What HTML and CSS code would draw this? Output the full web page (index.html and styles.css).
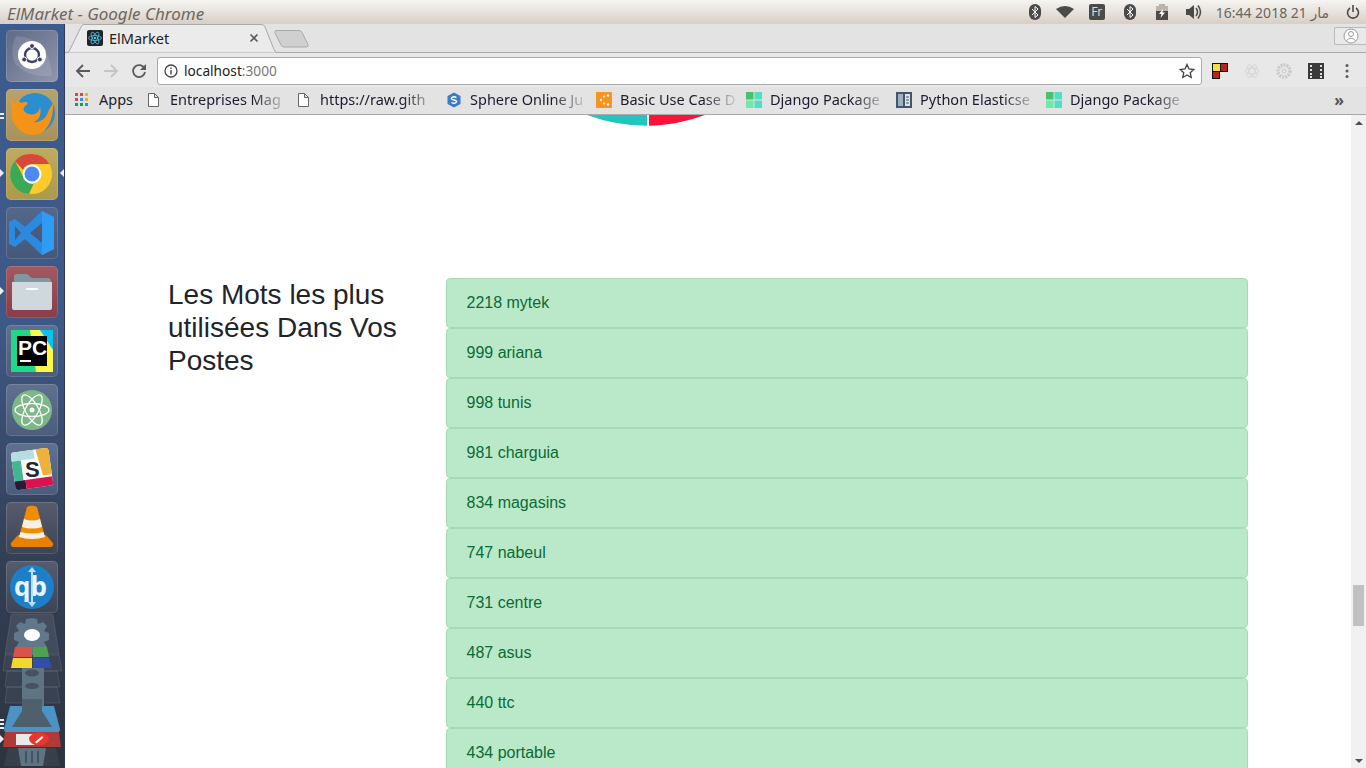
FILE: index.html
```html
<!DOCTYPE html>
<html lang="en">
<head>
    <meta charset="UTF-8">
    <title>ElMarket - Google Chrome</title>
    <link rel="stylesheet" href="styles.css">
</head>
<body>
    <header class="topbar">
        <div class="window-title">ElMarket - Google Chrome</div>
        <div class="tray">
            <svg class="tray-bt" width="14" height="18" viewBox="0 0 14 18"><rect x="1" y="1" width="12" height="16" rx="6" fill="#4a4a4a"/><path d="M4 6l6 6-3 2.500V3.500l3 2.500-6 6" fill="none" stroke="#fff" stroke-width="1"/></svg>
            <svg class="tray-wifi" width="18" height="12" viewBox="0 0 18 12"><path d="M0 3Q9-3 18 3L9 12z" fill="#4a4a4a"/></svg>
            <div class="tray-fr">Fr</div>
            <svg class="tray-bt2" width="14" height="18" viewBox="0 0 14 18"><rect x="1" y="1" width="12" height="16" rx="6" fill="#4a4a4a"/><path d="M4 6l6 6-3 2.500V3.500l3 2.500-6 6" fill="none" stroke="#fff" stroke-width="1"/></svg>
            <svg class="tray-batt" width="12" height="16" viewBox="0 0 12 16"><path d="M0 2h3V0h6v2h3v5H0z" fill="#b9b4ae"/><path d="M0 7h12v9H0z" fill="#4a4a4a"/><path d="M7 5L3 10h2.500L4.500 14 9 8.500H6.500z" fill="#fff"/></svg>
            <svg class="tray-vol" width="16" height="16" viewBox="0 0 16 16"><path d="M0 5h3l5-4v14l-5-4H0z" fill="#4a4a4a"/><path d="M10 4q3 4 0 8M12 1.500q5 6.500 0 13" fill="none" stroke="#4a4a4a" stroke-width="1.500"/></svg>
            <div class="clock"><span>16:44</span> <span>2018</span> <span>21</span> <span class="clock-ar" dir="rtl">مار</span></div>
            <svg class="tray-power" width="14" height="14" viewBox="0 0 14 14"><path d="M4 3a5.500 5.500 0 1 0 6 0M7 0v7" fill="none" stroke="#4a4a4a" stroke-width="1.600"/></svg>
        </div>
    </header>

    <div class="desktop">
        <nav class="dock">
            <div class="tile tile-ubuntu">
                <svg viewBox="0 0 52 52"><path d="M10 6Q44 8 46 46 20 48 8 32 4 18 10 6z" fill="#fff" opacity=".12"/><circle cx="26" cy="25" r="14" fill="#fff"/><circle cx="26" cy="25" r="7" fill="none" stroke="#3c4260" stroke-width="2.400"/><circle cx="26" cy="16" r="2.500" fill="#3c4260" stroke="#fff"/><circle cx="18.200" cy="29.500" r="2.500" fill="#3c4260" stroke="#fff"/><circle cx="33.800" cy="29.500" r="2.500" fill="#3c4260" stroke="#fff"/></svg>
            </div>
            <div class="tile tile-firefox">
                <svg viewBox="0 0 52 52"><circle cx="29" cy="24" r="20" fill="#2a8fd0"/><path d="M4 10l5 4 3-3 3 3c8-3 8 1 4 3-3 3-1 7 4 8 6 2 10-2 11-7 2 7-1 14-7 15 6 1 13-3 15-10 1-3 3-5 5-9 1 14-5 32-20 32C14 46 3 32 6 22z" fill="#f39318"/></svg>
            </div>
            <div class="tile tile-chrome">
                <svg viewBox="0 0 52 52"><circle cx="26" cy="26" r="20" fill="#ffca2c"/><path d="M26 6a20 20 0 0 1 17.300 10H26a10 10 0 0 0-9 5.800L9 13A20 20 0 0 1 26 6z" fill="#d8483c"/><path d="M9 13l9.500 18a10 10 0 0 0 9 5L23 46A20 20 0 0 1 9 13z" fill="#3aa856"/><circle cx="26" cy="26" r="9.500" fill="#fff"/><circle cx="26" cy="26" r="7.500" fill="#4f88ee"/></svg>
            </div>
            <div class="tile tile-code">
                <svg viewBox="0 0 52 52"><path d="M36 4l12 6v32l-12 6-17-16-10 8-6-3V15l6-3 10 8z" fill="#2a8adf"/><path d="M36 16L24 26l12 10z" fill="#4a5a7c"/><path d="M9 19v14l6-7z" fill="#4a5a7c"/><path d="M36 4l12 6v32l-12 6z" fill="#2f9bf2"/></svg>
            </div>
            <div class="tile tile-files">
                <svg viewBox="0 0 52 52"><path d="M8 11q0-3 3-3h10l5 4h16q3 0 3 3v10H8z" fill="#7e98a2"/><path d="M6 16h40v26q0 2-2 2H8q-2 0-2-2z" fill="#cfd8dd"/><rect x="20" y="22" width="12" height="2" fill="#fff"/></svg>
            </div>
            <div class="tile tile-pycharm">
                <svg viewBox="0 0 52 52"><rect x="5" y="5" width="42" height="42" fill="#21d789"/><path d="M24 5h23v42H30z" fill="#fcf84a"/><path d="M34 5h13v20z" fill="#07c3f2"/><rect x="11" y="11" width="30" height="30" fill="#000"/><rect x="14" y="35" width="11" height="2" fill="#fff"/><text x="12" y="30" class="pc-text">PC</text></svg>
            </div>
            <div class="tile tile-atom">
                <svg viewBox="0 0 52 52"><circle cx="26" cy="26" r="20" fill="#7db788"/><g fill="none" stroke="#fff" stroke-width="1.300"><ellipse cx="26" cy="26" rx="17" ry="6.500"/><ellipse cx="26" cy="26" rx="17" ry="6.500" transform="rotate(60 26 26)"/><ellipse cx="26" cy="26" rx="17" ry="6.500" transform="rotate(120 26 26)"/></g><circle cx="26" cy="26" r="2.500" fill="#fff"/></svg>
            </div>
            <div class="tile tile-slack">
                <svg viewBox="0 0 52 52"><g transform="rotate(-8 26 26)"><rect x="7" y="7" width="38" height="38" rx="3" fill="#fff"/><path d="M7 10q0-3 3-3h20v9H7z" fill="#b3dfe0"/><path d="M32 7h10q3 0 3 3v24H36z" fill="#eeb23a"/><path d="M7 16h9v20H7z" fill="#41b78f"/><path d="M7 36h11v9h-8q-3 0-3-3z" fill="#2b1a33"/><path d="M18 36h27v6q0 3-3 3H18z" fill="#d9134f"/></g><text x="19" y="34" class="slack-text">S</text></svg>
            </div>
            <div class="tile tile-vlc">
                <svg viewBox="0 0 52 52"><path d="M5 41l7-8h28l7 8q1 4-3 4H8q-4 0-3-4z" fill="#e88000"/><path d="M21 5q5-3 10 0l8 30q-13 5-26 0z" fill="#f08c00"/><path d="M18 17q8 3 16 0l2 8q-10 3-20 0z" fill="#f4f1ea"/><path d="M14.500 30q11.500 3 23 0l1.500 5q-13 4-26 0z" fill="#f4f1ea"/></svg>
            </div>
            <div class="tile tile-qb">
                <svg viewBox="0 0 52 52"><circle cx="26" cy="26" r="22" fill="#1c7fc7"/><text x="8" y="35" class="qb-text">qb</text><path d="M26 6l-4 5h3v30h2V11h3zM26 46l-4-5h8z" fill="#b8e0f8"/></svg>
            </div>
            <svg class="dock-stack" width="65" height="153" viewBox="0 0 65 153">
                <path d="M11 3q0-2 3-2h36q3 0 3 2l6 38H5z" fill="#fff" fill-opacity=".09" stroke="#fff" stroke-opacity=".1"/>
                <path d="M5 42h54l3 16H3zM7 58h50l3 16H5zM7 74h50l3 16H5z" fill="#fff" fill-opacity=".05" stroke="#fff" stroke-opacity=".1"/>
                <path d="M32 5l5 1 1 5 5-2 4 4-3 5 5 2v7l-5 2 3 5-4 4-5-2-1 5-5 1-6-1-1-5-5 2-4-4 3-5-5-2v-7l5-2-3-5 4-4 5 2 1-5z" fill="#62778a"/>
                <ellipse cx="32" cy="22" rx="8" ry="6" fill="#fff"/>
                <path d="M15 34h17v10H13z" fill="#d9534a"/><path d="M33 34h14l2 10H33z" fill="#4fa24f"/>
                <path d="M13 45h19v10H11z" fill="#f3d62f"/><path d="M33 45h16l3 10H33z" fill="#2f4fa8"/>
                <path d="M22 55h22v38H22z" fill="#5e7483"/>
                <ellipse cx="32" cy="60" rx="7" ry="3.500" fill="#46525f"/><ellipse cx="32" cy="73" rx="7" ry="3" fill="#46525f"/>
                <path d="M10 93h44l6 23q0 3-2 3H6q-2 0-2-3z" fill="#4a93c4"/>
                <path d="M22 86h20v12l10 16H12l10-16z" fill="#4f5f6c"/>
                <path d="M5 119h54l2 15H3z" fill="#b03a36"/>
                <rect x="16" y="121" width="24" height="11" fill="#e9e9e9"/>
                <ellipse cx="39" cy="126" rx="10" ry="6.500" fill="#e8352e"/><path d="M35 129l7-6 1.500 1.500-7 6z" fill="#fff"/>
                <path d="M8 135h48l4 18H4z" fill="#fff" fill-opacity=".06"/>
                <path d="M18 135h28l-3 18H21z" fill="#5e7483"/>
                <path d="M26 138v12M32 138v12M38 138v12" stroke="#3b4755" stroke-width="1.500"/>
                <path d="M0 106h4v2H0zM0 110h4v2H0zM0 114h4v2H0zM0 122l4 4-4 4z" fill="#eee"/>
            </svg>
        </nav>

        <div class="browser">
            <div class="tabstrip">
                <div class="tab">
                    <svg class="tab-shape" width="214" height="29" viewBox="0 0 214 29"><path d="M0 28.500h2q2 0 3-3L16 3q1-2.500 3-2.500h178q2 0 3 2.500l9 22.500q1 3 3 3h2" fill="#ebebeb" stroke="#a9a9a9"/></svg>
                    <svg class="favicon" width="16" height="16" viewBox="0 0 16 16"><rect width="16" height="16" rx="2" fill="#20232a"/><g fill="none" stroke="#53c1de" stroke-width=".8"><ellipse cx="8" cy="8" rx="6.500" ry="2.500"/><ellipse cx="8" cy="8" rx="6.500" ry="2.500" transform="rotate(60 8 8)"/><ellipse cx="8" cy="8" rx="6.500" ry="2.500" transform="rotate(120 8 8)"/></g><circle cx="8" cy="8" r="1.300" fill="#53c1de"/></svg>
                    <span class="tab-title">ElMarket</span>
                    <svg class="tab-close" width="10" height="10" viewBox="0 0 10 10"><path d="M1.500 1.500l7 7M8.500 1.500l-7 7" stroke="#5a5a5a" stroke-width="1.600"/></svg>
                </div>
                <svg class="new-tab" width="36" height="20" viewBox="0 0 36 20"><path d="M3 1.500h22q2 0 3 2l6 12q1 2.500-2 2.500H10q-2 0-3-2L1 4q-1-2.500 2-2.500z" fill="#d0d0d0" stroke="#a9a9a9"/></svg>
                <div class="profile">
                    <svg width="16" height="16" viewBox="0 0 16 16"><circle cx="8" cy="8" r="7" fill="#fff" stroke="#9a9a9a"/><circle cx="8" cy="6" r="2.500" fill="none" stroke="#9a9a9a"/><path d="M3.500 12.500Q8 8 12.500 12.500" fill="none" stroke="#9a9a9a"/></svg>
                </div>
            </div>

            <div class="toolbar">
                <svg class="nav-btn nav-back" width="16" height="16" viewBox="0 0 16 16"><path d="M15 8H2M8 2L2 8l6 6" fill="none" stroke="#5a5a5a" stroke-width="1.800"/></svg>
                <svg class="nav-btn nav-fwd" width="16" height="16" viewBox="0 0 16 16"><path d="M1 8h13M8 2l6 6-6 6" fill="none" stroke="#c4c4c4" stroke-width="1.800"/></svg>
                <svg class="nav-btn nav-reload" width="16" height="16" viewBox="0 0 16 16"><path d="M13.500 5.500A6 6 0 1 0 14 9" fill="none" stroke="#5a5a5a" stroke-width="1.800"/><path d="M15 1v6H9z" fill="#5a5a5a"/></svg>
                <div class="omnibox">
                    <svg class="info" width="14" height="14" viewBox="0 0 14 14"><circle cx="7" cy="7" r="6" fill="none" stroke="#444" stroke-width="1.300"/><path d="M7 6v4.500M7 3.500v1.500" stroke="#444" stroke-width="1.400"/></svg>
                    <span class="url">localhost<span class="url-port">:3000</span></span>
                    <svg class="star" width="16" height="16" viewBox="0 0 16 16"><path d="M8 1.500l2 4.500 4.800.5-3.600 3.200 1 4.800L8 12l-4.200 2.500 1-4.800L1.200 6.500 6 6z" fill="none" stroke="#444" stroke-width="1.300"/></svg>
                </div>
                <div class="extensions">
                    <svg width="16" height="16" viewBox="0 0 16 16"><path d="M0 0h16v9H8v7H0z" fill="#111"/><rect x="1" y="1" width="7" height="7" fill="#f5e13a"/><rect x="9" y="1" width="6" height="7" fill="#b5261e"/><rect x="1" y="9" width="6" height="6" fill="#b5261e"/></svg>
                    <svg width="16" height="16" viewBox="0 0 16 16"><g fill="none" stroke="#d6d6d6"><ellipse cx="8" cy="8" rx="7" ry="3"/><ellipse cx="8" cy="8" rx="7" ry="3" transform="rotate(60 8 8)"/><ellipse cx="8" cy="8" rx="7" ry="3" transform="rotate(120 8 8)"/></g></svg>
                    <svg width="16" height="16" viewBox="0 0 16 16"><circle cx="8" cy="8" r="6" fill="none" stroke="#cacaca" stroke-width="3.500" stroke-dasharray="2 1"/><circle cx="8" cy="8" r="2" fill="none" stroke="#cacaca"/></svg>
                    <svg width="16" height="16" viewBox="0 0 16 16"><rect width="16" height="16" fill="#3a3a3a"/><path d="M2 2h2v2H2zM2 6h2v2H2zM2 10h2v2H2zM2 13h2v2H2zM12 2h2v2h-2zM12 6h2v2h-2zM12 10h2v2h-2zM12 13h2v2h-2z" fill="#ddd"/></svg>
                    <svg class="menu-dots" width="4" height="16" viewBox="0 0 4 16"><circle cx="2" cy="2.500" r="1.500" fill="#5a5a5a"/><circle cx="2" cy="8" r="1.500" fill="#5a5a5a"/><circle cx="2" cy="13.500" r="1.500" fill="#5a5a5a"/></svg>
                </div>
            </div>

            <div class="bookmarks">
                <div class="bm bm-apps">
                    <svg width="13" height="13" viewBox="0 0 13 13"><path d="M0 0h3v3H0z" fill="#e0433b"/><path d="M5 0h3v3H5z" fill="#e0433b"/><path d="M10 0h3v3h-3z" fill="#f4b400"/><path d="M0 5h3v3H0z" fill="#e0433b"/><path d="M5 5h3v3H5z" fill="#4285f4"/><path d="M10 5h3v3h-3z" fill="#f4b400"/><path d="M0 10h3v3H0z" fill="#0f9d58"/><path d="M5 10h3v3H5z" fill="#0f9d58"/><path d="M10 10h3v3h-3z" fill="#4285f4"/></svg>
                    <span>Apps</span>
                </div>
                <div class="bm">
                    <svg width="16" height="16" viewBox="0 0 16 16"><path d="M2.500 1.500h6l4 4v9h-10zM8.500 1.500v4h4" fill="#fff" stroke="#666"/></svg>
                    <span class="bm-label">Entreprises Mag</span>
                </div>
                <div class="bm">
                    <svg width="16" height="16" viewBox="0 0 16 16"><path d="M2.500 1.500h6l4 4v9h-10zM8.500 1.500v4h4" fill="#fff" stroke="#666"/></svg>
                    <span class="bm-label">https://raw.gith</span>
                </div>
                <div class="bm">
                    <svg width="16" height="16" viewBox="0 0 16 16"><path d="M8 .500l6.500 3.500v8L8 15.500 1.500 12V4z" fill="#3b7cc4"/><path d="M10.500 5.500Q8 4 6 5.500t2 2.500 2 2.500-4.500 0" fill="none" stroke="#fff" stroke-width="1.400"/></svg>
                    <span class="bm-label">Sphere Online Ju</span>
                </div>
                <div class="bm">
                    <svg width="16" height="16" viewBox="0 0 16 16"><rect width="16" height="16" rx="1" fill="#f7931e"/><circle cx="5" cy="8" r="1.200" fill="#fff"/><circle cx="8" cy="4.500" r="1" fill="#fff"/><circle cx="12" cy="3.500" r="1.200" fill="#fff"/><circle cx="8" cy="11.500" r="1" fill="#fff"/><circle cx="12" cy="12.500" r="1.200" fill="#fff"/></svg>
                    <span class="bm-label">Basic Use Case D</span>
                </div>
                <div class="bm">
                    <svg width="16" height="16" viewBox="0 0 16 16"><rect width="7.500" height="7.500" fill="#45c46d"/><rect x="8.500" width="7.500" height="7.500" fill="#4fe0c4"/><rect y="8.500" width="7.500" height="7.500" fill="#6fe8a8"/><rect x="8.500" y="8.500" width="7.500" height="7.500" fill="#4fe0c4"/></svg>
                    <span class="bm-label">Django Package</span>
                </div>
                <div class="bm">
                    <svg width="16" height="16" viewBox="0 0 16 16"><rect width="16" height="16" fill="#44546a"/><rect x="2" y="2" width="5" height="12" fill="#9fb0c0"/><rect x="9" y="2" width="5" height="12" fill="#dde3e8"/><path d="M10 5h3M10 8h3M10 11h3" stroke="#44546a"/></svg>
                    <span class="bm-label">Python Elasticse</span>
                </div>
                <div class="bm">
                    <svg width="16" height="16" viewBox="0 0 16 16"><rect width="7.500" height="7.500" fill="#45c46d"/><rect x="8.500" width="7.500" height="7.500" fill="#4fe0c4"/><rect y="8.500" width="7.500" height="7.500" fill="#6fe8a8"/><rect x="8.500" y="8.500" width="7.500" height="7.500" fill="#4fe0c4"/></svg>
                    <span class="bm-label">Django Package</span>
                </div>
                <span class="bm-more">»</span>
            </div>

            <div class="viewport">
                <main class="page">
                    <div class="chart-area">
                        <svg class="pie" width="140" height="12" viewBox="0 0 140 12"><path d="M9 0A171 171 0 0 0 69 10.700V0z" fill="#22c6c0"/><path d="M71 0V10.700A171 171 0 0 0 127 0z" fill="#ff1238"/></svg>
                    </div>
                    <div class="words">
                        <h3 class="words-title">Les Mots les plus utilisées Dans Vos Postes</h3>
                        <div class="words-list">
                            <div class="alert">2218 mytek</div>
                            <div class="alert">999 ariana</div>
                            <div class="alert">998 tunis</div>
                            <div class="alert">981 charguia</div>
                            <div class="alert">834 magasins</div>
                            <div class="alert">747 nabeul</div>
                            <div class="alert">731 centre</div>
                            <div class="alert">487 asus</div>
                            <div class="alert">440 ttc</div>
                            <div class="alert">434 portable</div>
                        </div>
                    </div>
                </main>
                <div class="scrollbar">
                    <div class="scroll-up"></div>
                    <div class="scroll-thumb"></div>
                    <div class="scroll-down"></div>
                </div>
            </div>
        </div>
    </div>
</body>
</html>
```

FILE: styles.css
```css
html, body {
    height: 100%;
    margin: 0;
    overflow: hidden;
}
body {
    display: flex;
    flex-direction: column;
    font-family: "Liberation Sans", Arial, sans-serif;
    background-color: #fff;
}

/* ubuntu top panel */
.topbar {
    height: 24px;
    flex: none;
    display: flex;
    align-items: center;
    justify-content: space-between;
    background: linear-gradient(#f6f5f2, #d8cfc6);
    color: #6a6560;
}
.window-title {
    margin: 2px 0 0 7px;
    font: italic 17px "Noto Sans", sans-serif;
    color: #6d6862;
}
.tray {
    display: flex;
    align-items: center;
}
.tray svg {
    flex: none;
}
.tray-wifi {
    margin-left: 14px;
}
.tray-fr {
    width: 16px;
    height: 16px;
    margin-left: 15px;
    border-radius: 2px;
    background-color: #4a4a4a;
    color: #d8d8d8;
    font: 12px/16px "DejaVu Sans", sans-serif;
    text-align: center;
}
.tray-bt2 {
    margin-left: 18px;
}
.tray-batt {
    margin-left: 19px;
}
.tray-vol {
    margin-left: 18px;
}
.clock {
    margin-left: 14px;
    font: 14px "Noto Sans", "DejaVu Sans", sans-serif;
    color: #6a6560;
    white-space: nowrap;
}
.clock span {
    unicode-bidi: isolate;
}
.clock-ar {
    font-family: "DejaVu Sans", sans-serif;
}
.tray-power {
    margin: 0 6px 0 17px;
}

.desktop {
    flex: 1;
    display: flex;
    min-height: 0;
}

/* launcher */
.dock {
    width: 65px;
    flex: none;
    box-sizing: border-box;
    padding: 6px 0 0;
    display: flex;
    flex-direction: column;
    align-items: stretch;
    gap: 7px;
    overflow: hidden;
    background: linear-gradient(#3c5b8e 0%, #3e5987 40%, #333f55 72%, #2c3440 100%);
    border-right: 1px solid #2e3a50;
}
.tile {
    width: 52px;
    height: 52px;
    flex: none;
    margin-left: 6px;
    border-radius: 5px;
    box-shadow: inset 0 0 0 1px rgba(255, 255, 255, 0.14);
    position: relative;
}
.tile svg {
    display: block;
}
/* running app pips */
.tile-chrome::before,
.tile-files::before {
    content: "";
    position: absolute;
    left: -6px;
    top: 21px;
    border: 4px solid transparent;
    border-left: 4px solid #eee;
    border-right: 0;
}
.tile-chrome::after {
    content: "";
    position: absolute;
    left: 54px;
    top: 21px;
    border: 4px solid transparent;
    border-right: 4px solid #eee;
    border-left: 0;
}
.tile-firefox::before {
    content: "";
    position: absolute;
    left: -6px;
    top: 24px;
    width: 4px;
    height: 2px;
    background-color: #eee;
    box-shadow: 0 4px 0 #eee;
}
.tile-ubuntu {
    background: linear-gradient(135deg, #5f6a86, #9096ac);
}
.tile-firefox {
    background: linear-gradient(#b9a36c, #a8915a);
}
.tile-chrome {
    background: linear-gradient(#bdab5f, #ab9a48);
}
.tile-code {
    background: linear-gradient(#56688a, #46587a);
}
.tile-files {
    background: linear-gradient(#a25a62, #8a3c48);
}
.tile-pycharm,
.tile-atom,
.tile-slack {
    background: linear-gradient(#60708f, #4c5c7c);
}
.tile-vlc,
.tile-qb {
    background: linear-gradient(#565c6e, #3d4454);
}
.pc-text {
    font: bold 21px "Liberation Sans", sans-serif;
    fill: #fff;
}
.slack-text {
    font: bold 22px "Liberation Sans", sans-serif;
    fill: #222733;
}
.qb-text {
    font: bold 26px "Open Sans", sans-serif;
    fill: #e8f5fd;
}
.dock-stack {
    flex: none;
    margin-top: -7px;
    display: block;
}

/* chrome */
.browser {
    flex: 1;
    min-width: 0;
    display: flex;
    flex-direction: column;
}
.tabstrip {
    height: 29px;
    flex: none;
    box-sizing: border-box;
    display: flex;
    align-items: flex-start;
    background-color: #e3e3e3;
    border-bottom: 1px solid #a9a9a9;
}
.tab {
    width: 214px;
    height: 28px;
    position: relative;
    display: flex;
    align-items: center;
    padding-left: 22px;
    box-sizing: border-box;
}
.tab-shape {
    position: absolute;
    left: 0;
    top: 0;
}
.favicon, .tab-title, .tab-close {
    position: relative;
}
.tab-title {
    margin-left: 6px;
    font: 14.500px "Noto Sans", sans-serif;
    color: #222;
    width: 140px;
}
.new-tab {
    margin: 5px 0 0 -5px;
}
.profile {
    margin: 3px 0 0 auto;
    width: 32px;
    height: 18px;
    box-sizing: border-box;
    border: 1px solid #bbb;
    border-right: 0;
    border-radius: 2px 0 0 2px;
    display: flex;
    align-items: center;
    justify-content: center;
    background-color: #e9e9e9;
}
.toolbar {
    height: 34px;
    flex: none;
    box-sizing: border-box;
    padding-top: 2px;
    display: flex;
    align-items: center;
    background-color: #e8e8e8;
}
.nav-btn {
    flex: none;
}
.nav-back {
    margin-left: 10px;
}
.nav-fwd {
    margin-left: 12px;
}
.nav-reload {
    margin-left: 12px;
}
.omnibox {
    width: 1045px;
    height: 28px;
    margin-left: 10px;
    box-sizing: border-box;
    flex: none;
    display: flex;
    align-items: center;
    padding: 0 6px;
    background-color: #fff;
    border: 1px solid #a9a9a9;
    border-radius: 3px;
}
.url {
    margin: 0 0 2px 6px;
    font: 13.700px "Noto Sans", sans-serif;
    color: #222;
}
.url-port {
    color: #777;
}
.star {
    margin-left: auto;
}
.extensions {
    display: flex;
    align-items: center;
    gap: 16px;
    margin-left: 10px;
}
.menu-dots {
    margin-left: 5px;
}
.bookmarks {
    height: 28px;
    flex: none;
    box-sizing: border-box;
    padding: 0 0 2px 10px;
    display: flex;
    align-items: center;
    background-color: #e3e3e3;
    border-bottom: 1px solid #a9a9a9;
    font: 14.500px "Noto Sans", sans-serif;
    color: #1c1c2c;
}
.bm {
    display: flex;
    align-items: center;
    width: 150px;
    flex: none;
}
.bm-apps {
    width: 71px;
}
.bm svg {
    flex: none;
}
.bm-apps span {
    margin-left: 11px;
}
.bm span {
    margin-bottom: 2px;
}
.bm-label {
    width: 115px;
    margin-left: 8px;
    white-space: nowrap;
    -webkit-mask-image: linear-gradient(to right, #000 72%, rgba(0, 0, 0, 0.12));
    mask-image: linear-gradient(to right, #000 72%, rgba(0, 0, 0, 0.12));
}
.bm-more {
    margin-left: auto;
    padding-right: 22px;
    font-size: 16px;
    font-weight: 700;
    color: #555;
}

.viewport {
    flex: 1;
    min-height: 0;
    display: flex;
}
.page {
    flex: 1;
    min-width: 0;
    overflow: hidden;
    background-color: #fff;
    color: #212529;
}
.chart-area {
    height: 163px;
}
.pie {
    display: block;
    margin-left: 513px;
}
.words {
    display: flex;
    padding-left: 103px;
}
.words-title {
    width: 278px;
    flex: none;
    box-sizing: border-box;
    margin: 0;
    padding-right: 30px;
    font-size: 28px;
    font-weight: 400;
    line-height: 33px;
}
.words-list {
    width: 802px;
    flex: none;
}
.alert {
    height: 50px;
    box-sizing: border-box;
    padding: 12px 20px 12px 19.500px;
    font-size: 16px;
    line-height: 24px;
    color: #0b6a36;
    background-color: #b9e9c9;
    border: 1px solid #a9d8b9;
    border-radius: 4px;
}
.scrollbar {
    width: 15px;
    flex: none;
    display: flex;
    flex-direction: column;
    align-items: center;
    background-color: #f1f1f1;
}
.scroll-up {
    margin-top: 6px;
    width: 0;
    height: 0;
    border: 4px solid transparent;
    border-top: 0;
    border-bottom: 4px solid #505050;
}
.scroll-thumb {
    width: 11px;
    height: 41px;
    margin-top: 460px;
    background-color: #c1c1c1;
}
.scroll-down {
    margin-top: 133px;
    width: 0;
    height: 0;
    border: 4px solid transparent;
    border-bottom: 0;
    border-top: 4px solid #505050;
}
```
